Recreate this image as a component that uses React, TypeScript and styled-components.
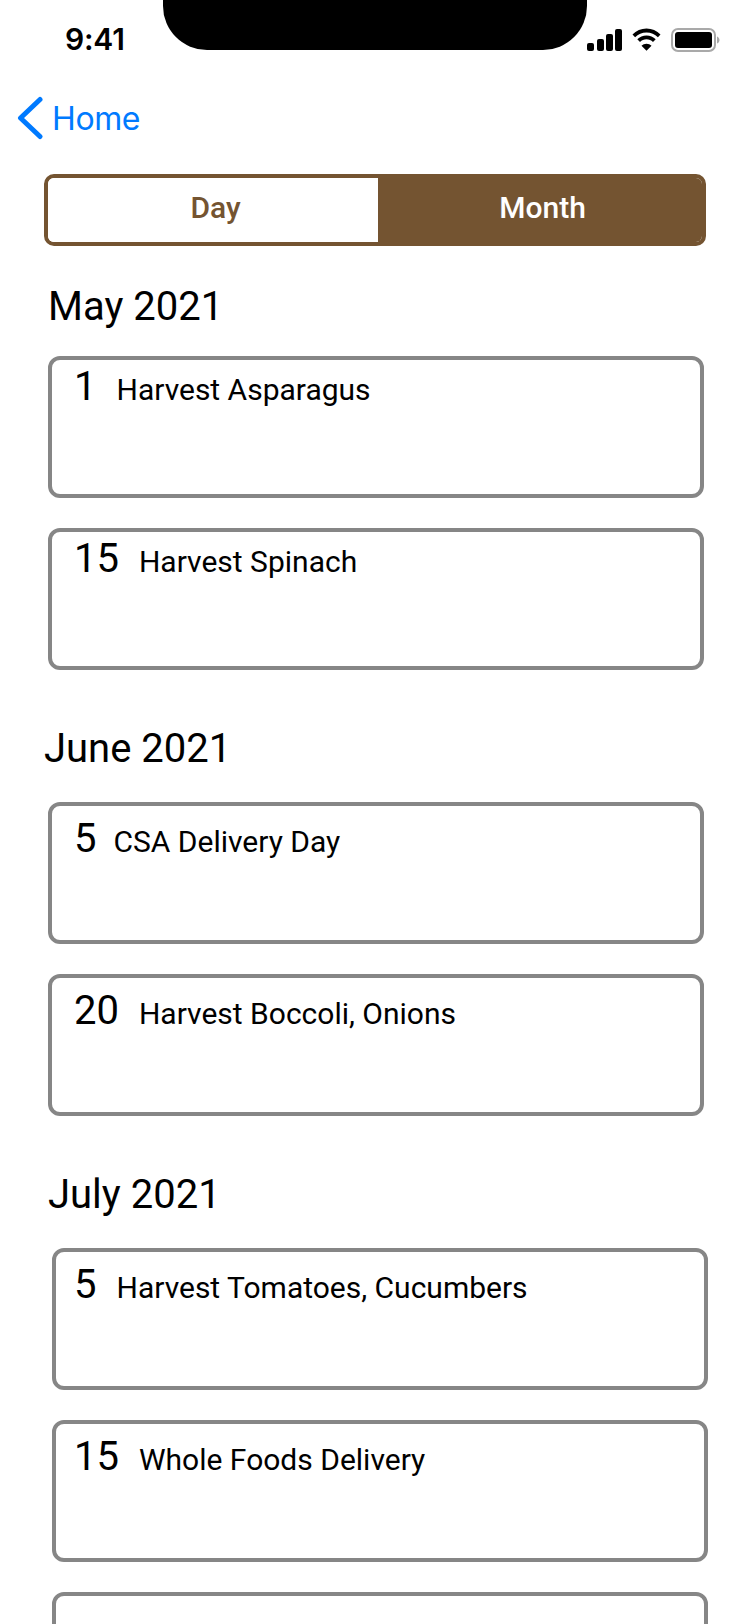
import type { FC } from 'react'
import styled, { createGlobalStyle } from 'styled-components'

const GlobalStyle = createGlobalStyle`
  html, body {
    margin: 0;
    padding: 0;
    background: #fff;
  }
  body {
    font-family: Roboto, "Liberation Sans", sans-serif;
  }
`

const Screen = styled.div`
  width: 750px;
  height: 1624px;
  overflow: hidden;
  background: #fff;
`

// Status bar

const StatusBar = styled.div`
  display: flex;
  height: 50px;
`

const Time = styled.div`
  width: 163px;
  padding: 21px 0 0 65px;
  box-sizing: border-box;
  font-family: Inter, sans-serif;
  font-size: 30px;
  line-height: 36px;
  font-weight: 600;
  letter-spacing: -0.2px;
  color: #000;
`

const Notch = styled.div`
  width: 424px;
  height: 50px;
  background: #000;
  border-radius: 0 0 44px 44px;
`

const StatusIcons = styled.div`
  display: flex;
  align-items: center;
  gap: 9px;
  padding: 28px 0 0 0;
  height: 23px;
`

// Nav

const BackLink = styled.div`
  display: flex;
  align-items: center;
  gap: 9px;
  height: 44px;
  margin: 46px 0 0 17px;
  font-family: Inter, sans-serif;
  font-size: 32px;
  letter-spacing: -0.4px;
  color: #007aff;
`

// Segmented control

const Segments = styled.div`
  display: flex;
  width: 662px;
  height: 72px;
  margin: 34px 0 0 44px;
  box-sizing: border-box;
  border: 4px solid #745431;
  border-radius: 10px;
  overflow: hidden;
`

const Segment = styled.div<{ $active?: boolean }>`
  flex: ${({ $active }) => ($active ? '1' : '0 0 330px')};
  box-sizing: border-box;
  display: flex;
  align-items: center;
  justify-content: center;
  padding: 0 0 5px 5px;
  font-size: 30px;
  font-weight: 500;
  background: ${({ $active }) => ($active ? '#745431' : '#fff')};
  color: ${({ $active }) => ($active ? '#fff' : '#745431')};
`

// Month sections

const MonthTitle = styled.h2<{ $left: number; $top: number }>`
  margin: ${({ $top }) => $top}px 0 0 ${({ $left }) => $left}px;
  font-size: 40px;
  line-height: 48px;
  font-weight: 400;
  color: #000;
`

const EventList = styled.div<{ $left: number; $top: number }>`
  display: flex;
  flex-direction: column;
  gap: 30px;
  margin: ${({ $top }) => $top}px 0 0 ${({ $left }) => $left}px;
`

const EventCard = styled.div<{ $inset: number; $top: number }>`
  display: flex;
  align-items: flex-start;
  width: 656px;
  height: 142px;
  box-sizing: border-box;
  border: 4px solid #868686;
  border-radius: 12px;
  padding: ${({ $top }) => $top}px 0 0 ${({ $inset }) => $inset}px;
  background: #fff;
`

const DayNumber = styled.span`
  font-size: 40px;
  line-height: 48px;
  color: #000;
`

const EventName = styled.span<{ $gap: number }>`
  margin: 10px 0 0 ${({ $gap }) => $gap}px;
  font-size: 30px;
  line-height: 34px;
  color: #000;
`

const SECTIONS = [
  {
    title: 'May 2021',
    titleLeft: 48,
    titleTop: 37,
    listLeft: 48,
    listTop: 25,
    inset: 22,
    textTop: 3,
    events: [
      { day: 1, name: 'Harvest Asparagus', gap: 20 },
      { day: 15, name: 'Harvest Spinach', gap: 20 },
    ],
  },
  {
    title: 'June 2021',
    titleLeft: 44,
    titleTop: 55,
    listLeft: 48,
    listTop: 29,
    inset: 22,
    textTop: 9,
    events: [
      { day: 5, name: 'CSA Delivery Day', gap: 17 },
      { day: 20, name: 'Harvest Boccoli, Onions', gap: 20 },
    ],
  },
  {
    title: 'July 2021',
    titleLeft: 48,
    titleTop: 55,
    listLeft: 52,
    listTop: 29,
    inset: 18,
    textTop: 9,
    events: [
      { day: 5, name: 'Harvest Tomatoes, Cucumbers', gap: 20 },
      { day: 15, name: 'Whole Foods Delivery', gap: 20 },
      { day: null, name: '', gap: 0 },
    ],
  },
]

const SignalIcon: FC = () => (
  <svg width="35" height="22" viewBox="0 0 35 22" fill="#000">
    <rect x="0" y="14" width="7" height="8" rx="2" />
    <rect x="10" y="10" width="7" height="12" rx="2" />
    <rect x="19" y="5" width="7" height="17" rx="2" />
    <rect x="28" y="0" width="7" height="22" rx="2" />
  </svg>
)

const WifiIcon: FC = () => (
  <svg width="31" height="23" viewBox="0 0 31 23" fill="#000">
    <path d="M15.5 4.6c4.4 0 8.4 1.7 11.4 4.6l2.6-2.7C25.800 2.900 20.900.6 15.500.6S5.200 2.900 1.500 6.500l2.600 2.700c3-2.900 7-4.600 11.400-4.600z" />
    <path d="M15.500 11.300c2.500 0 4.800 1 6.500 2.600l2.700-2.700c-2.400-2.300-5.600-3.700-9.200-3.700s-6.800 1.400-9.200 3.700L9 13.900c1.700-1.600 4-2.600 6.500-2.600z" />
    <path d="M15.500 22.800l5-5.100c-1.300-1.200-3-2-5-2s-3.700.8-5 2z" />
  </svg>
)

const BatteryIcon: FC = () => (
  <svg width="49" height="24" viewBox="0 0 49 24">
    <rect x="1" y="1" width="43" height="22" rx="6" fill="none" stroke="#a9a9a9" strokeWidth="2" />
    <rect x="4" y="4" width="37" height="16" rx="3" fill="#000" />
    <path d="M46 8.500c1.500.5 2.500 2 2.500 3.500s-1 3-2.500 3.500z" fill="#a9a9a9" />
  </svg>
)

const BackChevron: FC = () => (
  <svg width="26" height="44" viewBox="0 0 26 44" fill="none">
    <path d="M23 3.500 3.500 22 23 40.500" stroke="#007aff" strokeWidth="5" strokeLinecap="round" strokeLinejoin="round" />
  </svg>
)

const App: FC = () => (
  <Screen>
    <GlobalStyle />
    <StatusBar>
      <Time>9:41</Time>
      <Notch />
      <StatusIcons>
        <SignalIcon />
        <WifiIcon />
        <BatteryIcon />
      </StatusIcons>
    </StatusBar>

    <BackLink>
      <BackChevron />
      Home
    </BackLink>

    <Segments>
      <Segment>Day</Segment>
      <Segment $active>Month</Segment>
    </Segments>

    {SECTIONS.map((section) => (
      <section key={section.title}>
        <MonthTitle $left={section.titleLeft} $top={section.titleTop}>
          {section.title}
        </MonthTitle>
        <EventList $left={section.listLeft} $top={section.listTop}>
          {section.events.map((event, i) => (
            <EventCard key={i} $inset={section.inset} $top={section.textTop}>
              {event.day !== null && <DayNumber>{event.day}</DayNumber>}
              {event.name && <EventName $gap={event.gap}>{event.name}</EventName>}
            </EventCard>
          ))}
        </EventList>
      </section>
    ))}
  </Screen>
)

export default App
